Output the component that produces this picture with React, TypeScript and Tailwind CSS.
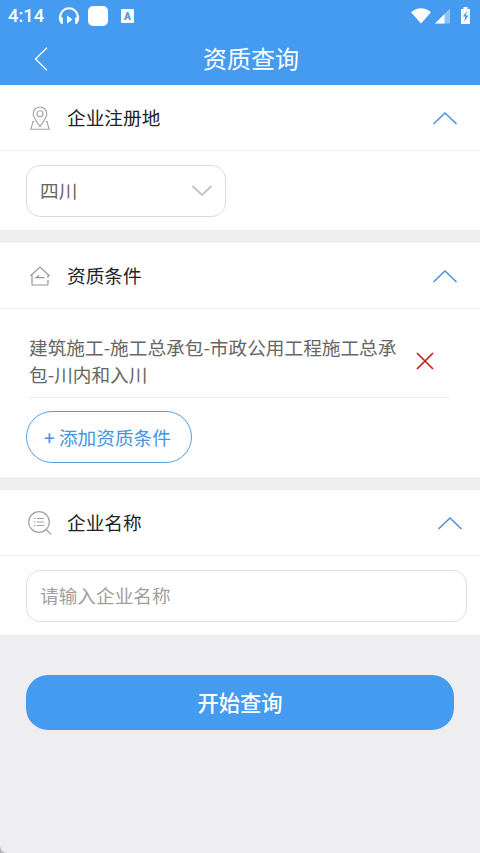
import { useState } from 'react';
import type { ReactNode } from 'react';

const PROVINCE = '四川';

function Chevron({ up = false, className }: { up?: boolean; className?: string }) {
  return (
    <svg viewBox="0 0 26 14" fill="none" stroke="currentColor" className={className}>
      <path d={up ? 'M1.5 13 13 2 24.5 13' : 'M1.500 2 11 11 20.500 2'} />
    </svg>
  );
}

function PinIcon() {
  return (
    <svg width="20" height="24" viewBox="0 0 20 24" fill="none" stroke="#a3a3a3" strokeWidth="1.1">
      <path d="M10 20.5C7 16 3.2 11.500 3.200 7.800a6.800 6.800 0 0 1 13.600 0C16.800 11.500 13 16 10 20.500Z" />
      <circle cx="10" cy="7.700" r="3" />
      <path d="M4.500 15.500H3L.900 23.200h18.200L17 15.500h-1.500" />
    </svg>
  );
}

function HouseIcon() {
  return (
    <svg width="20" height="20" viewBox="0 0 20 20" fill="none" stroke="#979797" strokeWidth="1.200">
      <path d="M18 14v4q0 1-1 1H3q-1 0-1-1V9.500H.800L10 1l9.200 8.500H18V12" />
      <path d="M14.500 11.700H6L9 9.500" />
    </svg>
  );
}

function SearchListIcon() {
  return (
    <svg width="24" height="24" viewBox="0 0 24 24" fill="none" stroke="#a3a3a3" strokeWidth="1.200">
      <circle cx="11" cy="11" r="10.300" />
      <path d="m18 18.500 5.300 5" />
      <path d="M6 7.500h1.500M9 7.500h7M6 11h1.500M9 11h7M6 14.500h1.500M9 14.500h7" />
    </svg>
  );
}

function StatusBar() {
  return (
    <div className="flex h-8 items-center pl-2 pr-2 font-[Roboto,sans-serif] text-white">
      <span className="w-[50px] text-[18.4px] font-medium leading-8">4:14</span>
      <svg width="22" height="18" viewBox="0 0 22 18" fill="none">
        <path d="M3.500 15A8.900 8.900 0 1 1 18.500 15" stroke="white" strokeWidth="2.100" />
        <path d="M.800 9.500 4.800 10.500V17H3.500Q.800 15 .800 9.500ZM21.200 9.500 17.200 10.500V17h1.300Q21.200 15 21.200 9.500Z" fill="white" />
        <path d="M9 8.500 14.500 12.500 9 16.500Z" fill="white" />
      </svg>
      <span className="ml-2 h-5 w-5 rounded-[5px] bg-white" />
      <span className="ml-[13px] flex h-[14px] w-[13px] items-center justify-center rounded-[1px] bg-white text-[10px] font-black text-[#449bef]">
        A
      </span>
      <svg width="62" height="18" viewBox="0 0 62 18" className="ml-auto">
        <path d="M1 5.200Q11 -2.500 21 5.200L11 16.500Z" fill="white" />
        <path d="M40 1.500V16.500H25Z" fill="white" fillOpacity=".4" />
        <path d="M34.500 7V16.500H25Z" fill="white" />
        <path d="M51 2h2.500V0h4v2H60v15h-9Z" fill="white" />
        <path d="M57 4 52.800 9.500h2.500L54.300 14.500l4.300-6h-2.700Z" fill="#449bef" />
      </svg>
    </div>
  );
}

interface SectionProps {
  icon: ReactNode;
  title: string;
  chevronInset?: string;
  children: ReactNode;
}

function Section({ icon, title, chevronInset = 'pr-[22px]', children }: SectionProps) {
  const [open, setOpen] = useState(true);

  return (
    <section className="bg-white">
      <button
        className={`flex h-[66px] w-full items-center border-b border-[#eeeeef] pl-[27px] ${chevronInset}`}
        onClick={() => setOpen(!open)}
      >
        <span className="flex w-[26px] justify-center">{icon}</span>
        <span className="ml-[14px] pb-px text-[18.67px] text-[#222]">{title}</span>
        <Chevron up={open} className="ml-auto h-[14px] w-[26px] stroke-[1.5] text-[#4a8fd9]" />
      </button>
      {open && children}
    </section>
  );
}

export default function App() {
  const [conditions, setConditions] = useState(['建筑施工-施工总承包-市政公用工程施工总承包-川内和入川']);
  const [company, setCompany] = useState('');

  return (
    <div className="w-[480px] bg-[#b5b5b5]">
      <div className="flex h-[853px] flex-col rounded-bl-[7px] bg-[#eeeef0] font-['Noto_Sans_CJK_SC',sans-serif]">
        <header className="h-[85px] bg-[#449bef] text-white">
          <StatusBar />
          <div className="flex h-[53px] items-center">
            <button aria-label="返回" className="ml-[34px] w-5">
              <svg width="14" height="24" viewBox="0 0 14 24" fill="none" stroke="white" strokeWidth="1.300">
                <path d="M13 .800 1.500 12 13 23.200" />
              </svg>
            </button>
            <h1 className="ml-[149px] pb-0.5 text-[24px] leading-none">资质查询</h1>
          </div>
        </header>

        <Section icon={<PinIcon />} title="企业注册地">
          <div className="h-[79px] pl-[26px] pt-[14px]">
            <button className="flex h-[52px] w-[200px] items-center justify-between rounded-[14px] border border-[#dcdcdc] pl-[13px] pr-[8px] text-[18.67px] text-[#666]">
              <span className="pb-0.5">{PROVINCE}</span>
              <Chevron className="h-[14px] w-[26px] stroke-[1.900] text-[#c4c4c4]" />
            </button>
          </div>
        </Section>

        <div className="mt-[13px]">
          <Section icon={<HouseIcon />} title="资质条件">
            {conditions.map((item) => (
              <div key={item} className="ml-[29px] mr-[30px] flex h-[89px] items-center border-b border-[#eeeeef] pt-[15px]">
                <p className="w-[372px] pb-0.5 text-[18.67px] leading-[27px] text-[#666]">{item}</p>
                <button
                  aria-label="删除"
                  className="ml-[15px]"
                  onClick={() => setConditions(conditions.filter((c) => c !== item))}
                >
                  <svg width="18" height="18" viewBox="0 0 18 18" stroke="#bf2417" strokeWidth="1.700">
                    <path d="m1 1 16 16M17 1 1 17" />
                  </svg>
                </button>
              </div>
            ))}
            <div className="h-[79px] pl-[26px] pt-[13px]">
              <button className="h-[52px] w-[166px] rounded-full border border-[#5a9fdc] pr-[3px] text-[18.67px] text-[#4595e0]">
                <span className="font-medium">+</span> 添加资质条件
              </button>
            </div>
          </Section>
        </div>

        <div className="mt-[13px]">
          <Section icon={<SearchListIcon />} title="企业名称" chevronInset="pr-[17px]">
            <div className="h-[79px] pl-[26px] pr-[13px] pt-[14px]">
              <input
                value={company}
                onChange={(e) => setCompany(e.target.value)}
                placeholder="请输入企业名称"
                className="h-[52px] w-full rounded-[14px] border border-[#dfdfdf] px-[13px] pb-[3px] text-[18.67px] text-[#666] outline-none placeholder:text-[#a0a0a0]"
              />
            </div>
          </Section>
        </div>

        <button className="ml-[26px] mr-[26px] mt-10 h-[55px] rounded-[22px] bg-[#449bef] pb-0.5 text-[21.3px] font-medium text-white">
          开始查询
        </button>
      </div>
    </div>
  );
}
